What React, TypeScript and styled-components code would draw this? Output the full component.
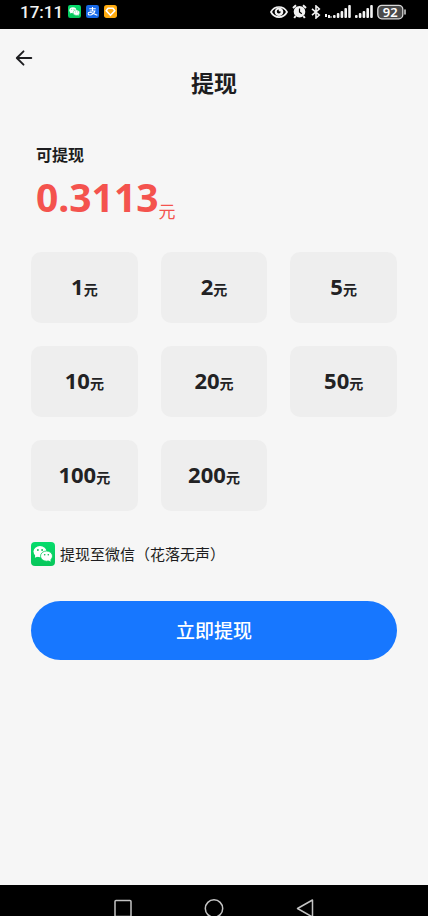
import React, { useState } from "react";
import styled, { createGlobalStyle } from "styled-components";

const GlobalStyle = createGlobalStyle`
  *, *::before, *::after { box-sizing: border-box; }
  body {
    margin: 0;
    background: #f6f6f6;
    color: #1d1d20;
    font-family: "Noto Sans", "Noto Sans CJK SC", sans-serif;
  }
  button { font-family: inherit; }
`;

const Screen = styled.div`
  display: flex;
  flex-direction: column;
  min-height: 100vh;
`;

const StatusBar = styled.div`
  display: flex;
  align-items: center;
  justify-content: space-between;
  height: 29px;
  padding: 0 21px 6px 20px;
  background: #000;
  color: #f2f2f2;
`;

const StatusGroup = styled.div<{ $gap: number }>`
  display: flex;
  align-items: center;
  gap: ${(p) => p.$gap}px;

  svg { display: block; }
`;

const Clock = styled.span`
  font-family: Roboto, sans-serif;
  font-size: 17px;
  line-height: 22px;
  font-weight: 500;
`;

const Header = styled.header`
  display: flex;
  flex-direction: column;
  padding: 17px 12px 0;
`;

const BackButton = styled.button`
  display: flex;
  align-items: center;
  justify-content: center;
  width: 24px;
  height: 24px;
  padding: 0;
  border: 0;
  background: none;
  color: #1d1d20;
  cursor: pointer;
`;

const Title = styled.h1`
  margin: 0;
  font-size: 23px;
  line-height: 26px;
  font-weight: 700;
  text-align: center;
`;

const Main = styled.main`
  flex: 1;
  padding: 47px 31px 32px;
`;

const Balance = styled.section`
  padding-left: 5px;
`;

const BalanceLabel = styled.h2`
  margin: 0;
  font-size: 16px;
  line-height: 24px;
  font-weight: 700;
`;

const BalanceAmount = styled.p`
  display: flex;
  align-items: flex-end;
  margin: 2px 0 0;
  color: #f4534e;
  font-size: 39px;
  line-height: 56px;
  font-weight: 700;
`;

const BalanceUnit = styled.span`
  font-size: 17px;
  line-height: 26px;
  font-weight: 400;
`;

const AmountGrid = styled.div`
  display: grid;
  grid-template-columns: repeat(3, 1fr);
  gap: 23px;
  margin-top: 27px;
`;

const AmountButton = styled.button`
  display: flex;
  align-items: baseline;
  justify-content: center;
  padding: 18px 0 21px;
  border: 0;
  border-radius: 10px;
  background: #eeeeee;
  color: #222224;
  font-size: 22px;
  line-height: 32px;
  font-weight: 700;
  cursor: pointer;

  &[aria-pressed="true"] { box-shadow: inset 0 0 0 2px #1677ff; }
`;

const AmountUnit = styled.span`
  font-size: 14px;
  line-height: 20px;
`;

const Payee = styled.div`
  display: flex;
  align-items: center;
  gap: 5px;
  margin-top: 31px;
  font-size: 15px;
  line-height: 24px;

  svg { display: block; flex: none; }
`;

const SubmitButton = styled.button`
  display: block;
  width: 100%;
  height: 59px;
  margin-top: 35px;
  padding: 0;
  border: 0;
  border-radius: 30px;
  background: #1777ff;
  color: #fff;
  font-size: 19px;
  line-height: 28px;
  font-weight: 500;
  cursor: pointer;
`;

const SystemNav = styled.nav`
  display: grid;
  grid-template-columns: repeat(3, 91px);
  justify-content: center;
  height: 31px;
  padding-top: 14px;
  overflow: hidden;
  background: #000;
`;

const SystemButton = styled.button`
  display: flex;
  justify-content: center;
  height: 20px;
  padding: 0;
  border: 0;
  background: none;
  cursor: pointer;

  svg { display: block; fill: none; stroke: #c4c4c4; stroke-width: 1.5; }
`;

function WechatIcon({ size, radius }: { size: number; radius: number }) {
  return (
    <svg width={size} height={size} viewBox="0 0 24 24" aria-hidden="true">
      <defs>
        <linearGradient id={`wechat-${size}`} x1="0" y1="0" x2="0" y2="1">
          <stop offset="0" stopColor="#06dc6c" />
          <stop offset="1" stopColor="#07c65a" />
        </linearGradient>
      </defs>
      <rect width="24" height="24" rx={radius} fill={`url(#wechat-${size})`} />
      <path d="M4.3 12.5 3.9 15.8 7.5 14.3Z" fill="#fff" />
      <ellipse cx="9" cy="9.6" rx="6.5" ry="5.6" fill="#fff" />
      <circle cx="6.9" cy="8" r=".9" fill="#07b852" />
      <circle cx="11.1" cy="8" r=".9" fill="#07b852" />
      <ellipse cx="15.5" cy="14.1" rx="6" ry="5.1" fill="#fff" stroke="#07cf61" strokeWidth=".8" />
      <path d="M17 18 19.7 19.8 19.3 16.8Z" fill="#fff" />
      <circle cx="13.7" cy="12.8" r=".8" fill="#07b852" />
      <circle cx="17.3" cy="12.8" r=".8" fill="#07b852" />
    </svg>
  );
}

function AlipayIcon() {
  return (
    <svg width="13" height="13" viewBox="0 0 24 24" aria-hidden="true">
      <rect width="24" height="24" rx="4" fill="#1769e8" />
      <path d="M6 7h12M12 3.5V11M7 11h9.5C15.500 15 11 18.500 7.500 18.500c-5 0-4.500-5-.5-5 4 0 8 3 14 5.500" fill="none" stroke="#fff" strokeWidth="2" />
    </svg>
  );
}

function GemIcon() {
  return (
    <svg width="13" height="13" viewBox="0 0 24 24" aria-hidden="true">
      <rect width="24" height="24" rx="5" fill="#ffab0f" />
      <path d="M7.500 6h9L20 10.500 12 19 4 10.500Z" fill="none" stroke="#fff" strokeWidth="3" strokeLinejoin="round" />
    </svg>
  );
}

function EyeIcon() {
  return (
    <svg width="18" height="14" viewBox="0 0 18 14" fill="none" stroke="#f2f2f2" aria-hidden="true">
      <path d="M1 7C4.500.3 13.500.3 17 7 13.500 13.700 4.500 13.700 1 7Z" strokeWidth="1.700" />
      <circle cx="9" cy="6.800" r="4.300" fill="#f2f2f2" stroke="none" />
      <path d="M8.800 6.300V4.600a2 2 0 1 0 2 2Z" fill="#000" stroke="none" />
    </svg>
  );
}

function AlarmIcon() {
  return (
    <svg width="15" height="15" viewBox="0 0 15 15" fill="none" stroke="#f2f2f2" aria-hidden="true">
      <circle cx="7.500" cy="7.700" r="5.800" fill="#f2f2f2" stroke="none" />
      <path d="M1 4 4 1.200M11 1.200l3 2.800M3.600 12 2.200 14M11.400 12l1.400 2" strokeWidth="2" />
      <path d="M7.500 4.500V8l2.300 1.800" stroke="#000" strokeWidth="1.200" />
    </svg>
  );
}

function BluetoothIcon() {
  return (
    <svg width="10" height="14" viewBox="0 0 10 14" fill="none" stroke="#f2f2f2" strokeWidth="1.600" aria-hidden="true">
      <path d="M1 3.800 8.300 10 5 13V1l3.300 3L1 10.200" />
    </svg>
  );
}

function SignalIcon({ roaming = false }: { roaming?: boolean }) {
  const lead = roaming ? 8 : 0;
  return (
    <svg width={18 + lead} height="14" viewBox={`0 0 ${18 + lead} 14`} fill="#f2f2f2" aria-hidden="true">
      {roaming && <path d="M0 9h2v3H0zM3 10h2v3H3zM5.500 11h1v2h-1z" />}
      {[3, 5, 7, 10, 13].map((height, i) => (
        <rect key={height} x={lead + i * 3.8} y={13 - height} width="2.600" height={height} rx="1" />
      ))}
    </svg>
  );
}

function BatteryIcon() {
  return (
    <svg width="30" height="16" viewBox="0 0 30 16" aria-hidden="true">
      <rect x=".8" y="1.300" width="25" height="13.500" rx="4" fill="#4a4a4a" stroke="#d8d8d8" strokeWidth="1.300" />
      <path d="M28 6v4" stroke="#d8d8d8" strokeWidth="1.500" strokeLinecap="round" />
      <text x="13.300" y="12.600" fill="#fff" fontSize="13" fontWeight="600" textAnchor="middle">92</text>
    </svg>
  );
}

const amounts = [1, 2, 5, 10, 20, 50, 100, 200];

export default function App() {
  const [selected, setSelected] = useState<number | null>(null);

  return (
    <Screen>
      <GlobalStyle />
      <StatusBar>
        <StatusGroup $gap={5}>
          <Clock>17:11</Clock>
          <WechatIcon size={13} radius={4} />
          <AlipayIcon />
          <GemIcon />
        </StatusGroup>
        <StatusGroup $gap={4}>
          <EyeIcon />
          <AlarmIcon />
          <BluetoothIcon />
          <SignalIcon roaming />
          <SignalIcon />
          <BatteryIcon />
        </StatusGroup>
      </StatusBar>

      <Header>
        <BackButton type="button" aria-label="返回">
          <svg width="18" height="18" viewBox="0 0 18 18" fill="none" stroke="currentColor" strokeWidth="1.900" strokeLinecap="round" strokeLinejoin="round" aria-hidden="true">
            <path d="M16.300 9H2M8.500 2.300 1.800 9l6.700 6.700" />
          </svg>
        </BackButton>
        <Title>提现</Title>
      </Header>

      <Main>
        <Balance>
          <BalanceLabel>可提现</BalanceLabel>
          <BalanceAmount>
            0.3113<BalanceUnit>元</BalanceUnit>
          </BalanceAmount>
        </Balance>

        <AmountGrid>
          {amounts.map((amount) => (
            <AmountButton
              key={amount}
              type="button"
              aria-pressed={selected === amount}
              onClick={() => setSelected(amount)}
            >
              <span>{amount}</span>
              <AmountUnit>元</AmountUnit>
            </AmountButton>
          ))}
        </AmountGrid>

        <Payee>
          <WechatIcon size={24} radius={4} />
          <span>提现至微信（花落无声）</span>
        </Payee>

        <SubmitButton type="button">立即提现</SubmitButton>
      </Main>

      <SystemNav aria-label="系统导航">
        <SystemButton type="button" aria-label="最近任务">
          <svg width="18" height="18" viewBox="0 0 18 18"><rect x="1" y="1.500" width="16" height="16" rx="1" /></svg>
        </SystemButton>
        <SystemButton type="button" aria-label="主页">
          <svg width="20" height="20" viewBox="0 0 20 20"><circle cx="10" cy="9.500" r="8.700" /></svg>
        </SystemButton>
        <SystemButton type="button" aria-label="返回上一页">
          <svg width="18" height="20" viewBox="0 0 18 20"><path d="M16.500 1v17L1.500 9.500Z" strokeLinejoin="round" /></svg>
        </SystemButton>
      </SystemNav>
    </Screen>
  );
}
